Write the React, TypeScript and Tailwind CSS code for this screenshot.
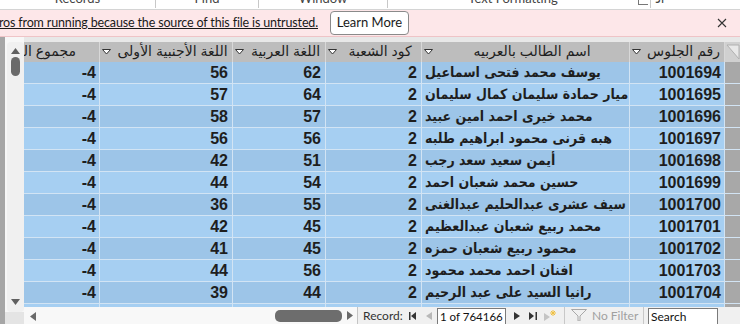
import React from "react";

const rows = [
  ["1001694", "يوسف محمد فتحى اسماعيل", "2", "62", "56", "-4"],
  ["1001695", "ميار حمادة سليمان كمال سليمان", "2", "64", "57", "-4"],
  ["1001696", "محمد خيرى احمد امين عبيد", "2", "57", "58", "-4"],
  ["1001697", "هبه قرنى محمود ابراهيم طلبه", "2", "56", "56", "-4"],
  ["1001698", "أيمن سعيد سعد رجب", "2", "51", "42", "-4"],
  ["1001699", "حسين محمد شعبان احمد", "2", "54", "44", "-4"],
  ["1001700", "سيف عشرى عبدالحليم عبدالغنى", "2", "55", "36", "-4"],
  ["1001701", "محمد ربيع شعبان عبدالعظيم", "2", "45", "42", "-4"],
  ["1001702", "محمود ربيع شعبان حمزه", "2", "45", "41", "-4"],
  ["1001703", "افنان احمد محمد محمود", "2", "56", "44", "-4"],
  ["1001704", "رانيا السيد على عبد الرحيم", "2", "44", "39", "-4"],
  ["1001705", "احمد محمد السيد عبد الله", "2", "63", "45", "-4"],
];

function DropArrow() {
  return (
    <svg width="9" height="6" viewBox="0 0 9 6">
      <polygon points="0.5,0.5 8.5,0.5 4.5,5" fill="#ffffff" stroke="#333333" strokeWidth="1" />
    </svg>
  );
}

function HeaderCell({ w, label, first }: { w: string; label: string; first?: boolean }) {
  return (
    <div className={`${w} h-full flex items-center border-r border-[#d8d8d8] overflow-hidden shrink-0`}>
      {first ? (
        <div dir="rtl" className="w-full pr-[23px] text-right whitespace-nowrap text-[14px] text-[#1f1f1f]">
          {label}
        </div>
      ) : (
        <>
          <div className="w-[13px] shrink-0 flex justify-center items-center">
            <DropArrow />
          </div>
          <div dir="rtl" className="flex-1 text-center whitespace-nowrap text-[14px] text-[#1f1f1f]">
            {label}
          </div>
        </>
      )}
    </div>
  );
}

export default function App() {
  const widths = ["w-[76px]", "w-[133px]", "w-[93px]", "w-[96px]", "w-[208px]", "w-[95px]"];
  return (
    <div className="w-[740px] h-[324px] overflow-hidden bg-white font-['Liberation_Sans','DejaVu_Sans',sans-serif]">
      {/* Ribbon group labels */}
      <div className="h-[10px] flex overflow-hidden border-b border-[#d4d4d4] bg-white text-[13px] leading-[13px] text-[#444] font-['Lato','DejaVu_Sans',sans-serif]">
        <div className="w-[155px] text-center -mt-[8px]">Records</div>
        <div className="w-px h-[8px] bg-[#c8c8c8]" />
        <div className="w-[102px] text-center -mt-[8px]">Find</div>
        <div className="w-px h-[8px] bg-[#c8c8c8]" />
        <div className="w-[128px] text-center -mt-[8px]">Window</div>
        <div className="w-px h-[8px] bg-[#c8c8c8]" />
        <div className="w-[262px] flex">
          <div className="flex-1 text-center -mt-[8px]">Text Formatting</div>
          <div className="w-[10px] h-[5px] mr-[2px] border-b border-l border-[#777]" />
        </div>
        <div className="w-px h-[8px] bg-[#c8c8c8]" />
        <div className="pl-[4px] -mt-[8px]">أد</div>
      </div>

      {/* Message bar */}
      <div className="h-[27px] bg-[#fde7e9] flex items-center border-b border-[#efc4c7] font-['Lato',sans-serif]">
        <div className="w-[318px] flex justify-end overflow-hidden">
          <span className="whitespace-nowrap underline text-[12.5px] tracking-[-0.15px] text-[#1a1a1a]">
            ros from running because the source of this file is untrusted.
          </span>
        </div>
        <div className="ml-[12px] w-[79px] h-[24px] flex items-center justify-center bg-white border border-[#8a8a8a] rounded-[4px] text-[13px] text-[#1a1a1a]">
          Learn More
        </div>
        <div className="ml-auto mr-[13px]">
          <svg width="10" height="10" viewBox="0 0 10 10">
            <path d="M1 1 L9 9 M9 1 L1 9" stroke="#333" strokeWidth="1.1" />
          </svg>
        </div>
      </div>

      {/* Main area */}
      <div className="flex h-[287px]">
        <div className="w-[5px] bg-[#a6a6a6]" />
        <div className="w-[19px] flex flex-col bg-[#f7f7f7]">
          <div className="h-[5px]" />
          <div className="ml-[2px] w-[17px] h-[270px] bg-[#f0f0f0] rounded-[4px] flex flex-col items-center">
            <div className="mt-[6px]">
              <svg width="9" height="6" viewBox="0 0 9 6">
                <polygon points="4.5,0 9,6 0,6" fill="#606060" />
              </svg>
            </div>
            <div className="mt-[3px] w-[9px] h-[19px] rounded-full bg-[#6a6a6a]" />
            <div className="mt-auto mb-[7px]">
              <svg width="9" height="6" viewBox="0 0 9 6">
                <polygon points="0,0 9,0 4.5,6" fill="#606060" />
              </svg>
            </div>
          </div>
          <div className="flex-1 bg-[#e4e4e4]" />
        </div>
        <div className="flex-1 flex flex-col">
          <div className="h-[5px] bg-[#e8e8e8]" />
          {/* Grid */}
          <div className="h-[270px] overflow-hidden flex flex-col">
            <div className="h-[20px] flex bg-[#bdbdbd] shrink-0">
              <HeaderCell w={widths[0]} label="مجموع الدرجات" first />
              <HeaderCell w={widths[1]} label="اللغة الأجنبية الأولى" />
              <HeaderCell w={widths[2]} label="اللغة العربية" />
              <HeaderCell w={widths[3]} label="كود الشعبة" />
              <HeaderCell w={widths[4]} label="اسم الطالب بالعربيه" />
              <HeaderCell w={widths[5]} label="رقم الجلوس" />
              <div className="w-[15px] h-full bg-[#d0d0d0] flex items-end justify-end shrink-0">
                <svg width="15" height="20" viewBox="0 0 15 20">
                  <polygon points="2,3 14,3 14,17" fill="#e8e8e8" stroke="#b0b0b0" strokeWidth="1" />
                </svg>
              </div>
            </div>
            {rows.map((r, i) => (
              <div
                key={i}
                className={`h-[22px] flex shrink-0 border-b border-[#d2e4f4] text-[16px] font-bold text-[#1e1e1e] leading-[21px] ${
                  i % 2 === 0 ? "bg-[#9dc5e8]" : "bg-[#a6cff2]"
                }`}
              >
                <div className={`${widths[0]} border-r border-[#d2e4f4] text-right pr-[3px] shrink-0`}>{r[5]}</div>
                <div className={`${widths[1]} border-r border-[#d2e4f4] text-right pr-[4px] shrink-0`}>{r[4]}</div>
                <div className={`${widths[2]} border-r border-[#d2e4f4] text-right pr-[4px] shrink-0`}>{r[3]}</div>
                <div className={`${widths[3]} border-r border-[#d2e4f4] text-right pr-[4px] shrink-0`}>{r[2]}</div>
                <div className={`${widths[4]} border-r border-[#d2e4f4] pl-[3px] shrink-0 overflow-hidden flex items-center`}>
                  <span
                    dir="rtl"
                    className="whitespace-nowrap text-[14px] font-bold font-stretch-condensed font-['DejaVu_Sans_Condensed','DejaVu_Sans',sans-serif]"
                  >
                    {r[1]}
                  </span>
                </div>
                <div className={`${widths[5]} border-r border-[#d2e4f4] text-right pr-[3px] shrink-0`}>{r[0]}</div>
                <div className="w-[15px] bg-[#a8a8a8] shrink-0" />
              </div>
            ))}
          </div>
          {/* Bottom bar */}
          <div className="h-[17px] flex shrink-0">
            <div className="w-[333px] bg-[#f8f8f8] flex items-start">
              <div className="ml-[6px] mt-[5px]">
                <svg width="6" height="9" viewBox="0 0 6 9">
                  <polygon points="6,0 6,9 0,4.5" fill="#6a6a6a" />
                </svg>
              </div>
              <div className="ml-auto mt-[3px] w-[67px] h-[12px] rounded-[5px] bg-[#6d6d6d]" />
              <div className="ml-[5px] mt-[4px]">
                <svg width="6" height="9" viewBox="0 0 6 9">
                  <polygon points="0,0 0,9 6,4.5" fill="#6a6a6a" />
                </svg>
              </div>
              <div className="w-[4px]" />
            </div>
            <div className="flex-1 bg-[#f0f0f0] border-l border-[#c4c4c4] flex items-start text-[12px] leading-[14px] text-[#333] font-['Lato',sans-serif]">
              <span className="ml-[5px] mt-[2px] w-[42px] whitespace-nowrap">Record:</span>
              <div className="ml-[4px] mt-[5px] flex items-center">
                <svg width="7" height="8" viewBox="0 0 7 8">
                  <rect x="0" y="0" width="1.5" height="8" fill="#333" />
                  <polygon points="7,0 7,8 2,4" fill="#333" />
                </svg>
              </div>
              <div className="ml-[10px] mt-[5px]">
                <svg width="6" height="8" viewBox="0 0 6 8">
                  <polygon points="6,0 6,8 0,4" fill="#b8b8b8" />
                </svg>
              </div>
              <div className="ml-[5px] mt-[1px] w-[69px] h-[18px] bg-white border border-[#7a7a7a] px-[2px] text-[11.5px] leading-[15px] whitespace-nowrap overflow-hidden text-[#111]">
                1 of 764166
              </div>
              <div className="ml-[8px] mt-[5px]">
                <svg width="6" height="8" viewBox="0 0 6 8">
                  <polygon points="0,0 0,8 6,4" fill="#333" />
                </svg>
              </div>
              <div className="ml-[9px] mt-[5px]">
                <svg width="8" height="8" viewBox="0 0 8 8">
                  <polygon points="0,0 0,8 5,4" fill="#333" />
                  <rect x="6.5" y="0" width="1.5" height="8" fill="#333" />
                </svg>
              </div>
              <div className="ml-[7px] mt-[3px]">
                <svg width="12" height="11" viewBox="0 0 12 11">
                  <polygon points="0,3 0,11 6,7" fill="#c4c4c4" />
                  <path d="M9 0 L9 6 M6 3 L12 3 M7 1 L11 5 M11 1 L7 5" stroke="#f0c040" strokeWidth="1" />
                </svg>
              </div>
              <div className="ml-[8px] w-px h-[17px] bg-[#c8c8c8]" />
              <div className="ml-[6px] mt-[2px]">
                <svg width="16" height="12" viewBox="0 0 16 12">
                  <polygon points="0.5,0.5 15.5,0.5 9,7 9,12 7,12 7,7" fill="none" stroke="#a8a8a8" strokeWidth="1" />
                </svg>
              </div>
              <span className="ml-[5px] mt-[2px] w-[48px] text-[#a0a0a0] whitespace-nowrap">No Filter</span>
              <div className="ml-[3px] w-px h-[17px] bg-[#c8c8c8]" />
              <div className="ml-[4px] mt-[1px] w-[70px] h-[18px] bg-white border border-[#7a7a7a] px-[2px] leading-[15px] text-[#111]">
                Search
              </div>
            </div>
          </div>
        </div>
      </div>
    </div>
  );
}
